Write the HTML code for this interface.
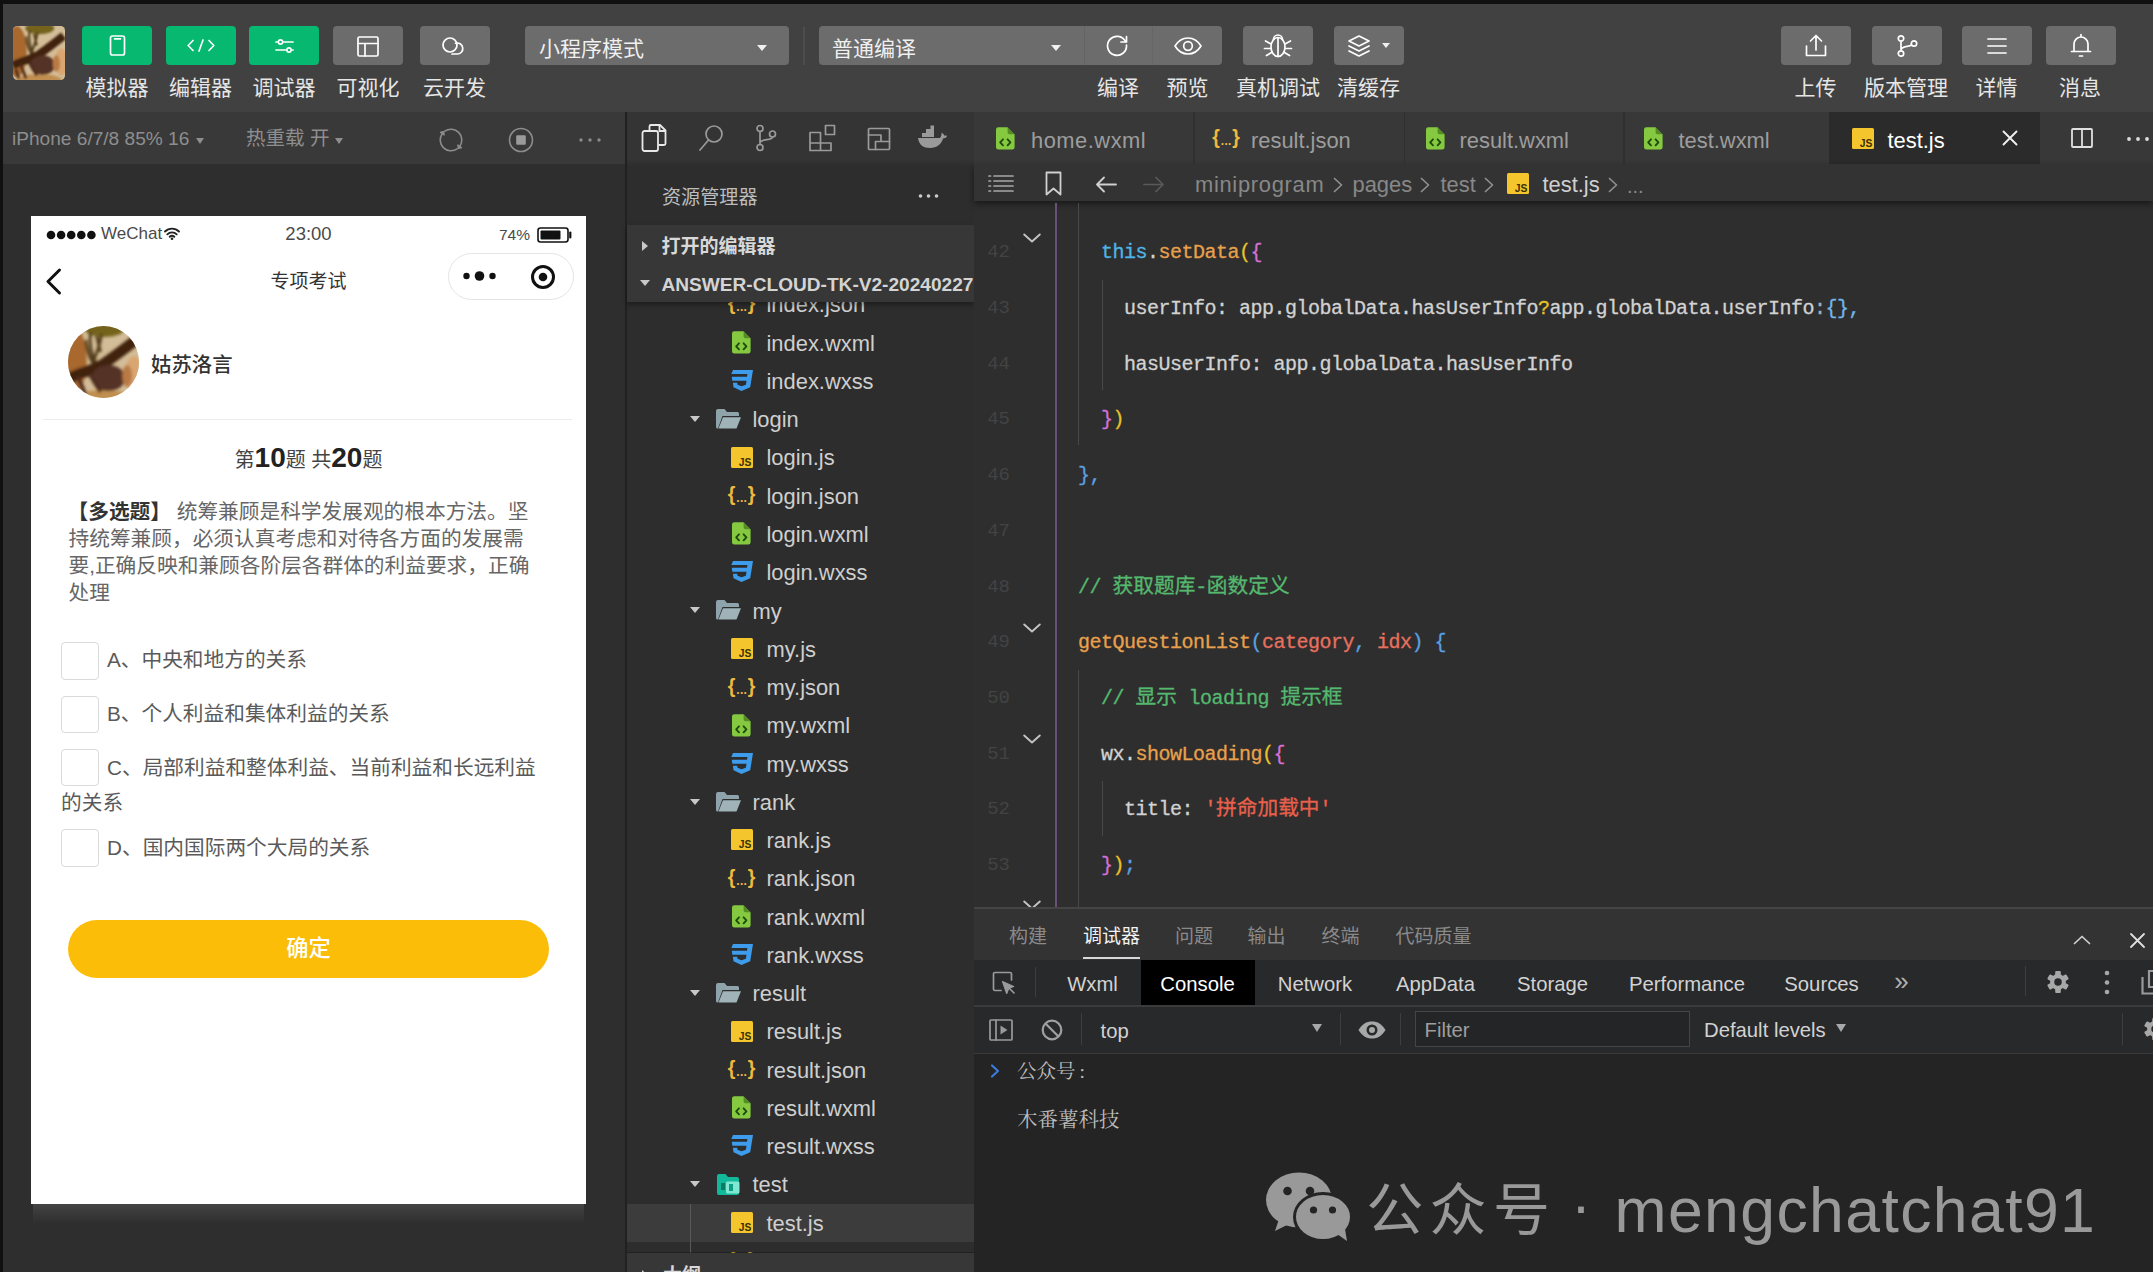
<!DOCTYPE html>
<html lang="zh-CN"><head><meta charset="utf-8"><title>微信开发者工具</title>
<style>
html,body{margin:0;padding:0;background:#101010;}
body{width:2153px;height:1272px;overflow:hidden;position:relative;font-family:"Liberation Sans","Noto Sans CJK SC",sans-serif;}
.a{position:absolute;white-space:nowrap;box-sizing:border-box;}
.m{font-family:"Liberation Mono","Noto Sans CJK SC",monospace;}
.s{font-family:"Liberation Serif","Noto Serif CJK SC",serif;}
svg{overflow:visible;}
b{font-weight:bold;}

</style></head>
<body>
<div class="a" style="left:3px;top:4px;width:2150px;height:108px;background:#414141;"></div>
<svg preserveAspectRatio="none" class="a" style="left:13px;top:26px;" width="52" height="54" viewBox="0 0 72 72"><defs><clipPath id="avc1"><rect x="0" y="0" width="72" height="72" rx="6"/></clipPath><filter id="avb1" x="-20%" y="-20%" width="140%" height="140%"><feGaussianBlur stdDeviation="1.600"/></filter></defs><g clip-path="url(#avc1)"><rect width="72" height="72" fill="#d3bd98"/><g filter="url(#avb1)"><ellipse cx="5" cy="34" rx="14" ry="34" fill="#a8682e"/><ellipse cx="37" cy="3" rx="20" ry="8" fill="#75641f"/><ellipse cx="67" cy="48" rx="9" ry="18" fill="#d9a672"/><ellipse cx="36" cy="73" rx="32" ry="9" fill="#c08e50"/><path d="M23 6C21 18 23 28 29 38M34 8C32 20 29 28 26 34M29 10L33 26M18 14C19 24 22 32 26 38" fill="none" stroke="#4e3814" stroke-width="2.800"/><path d="M0 53C14 45 26 45 36 38S56 24 70 13" fill="none" stroke="#41200f" stroke-width="11"/><ellipse cx="41" cy="52" rx="17" ry="13" fill="#553328"/><path d="M10 50L18 70M22 48L33 66M4 58L8 70" fill="none" stroke="#4e2c1a" stroke-width="4"/><ellipse cx="60" cy="50" rx="5" ry="11" fill="#b97a44"/></g></g></svg>
<div class="a" style="left:82px;top:26px;width:70px;height:39px;background:#06b870;border-radius:4px;"></div>
<div class="a" style="left:165.5px;top:26px;width:70px;height:39px;background:#06b870;border-radius:4px;"></div>
<div class="a" style="left:249px;top:26px;width:70px;height:39px;background:#06b870;border-radius:4px;"></div>
<div class="a" style="left:333px;top:26px;width:70px;height:39px;background:#6c6c6c;border-radius:4px;"></div>
<div class="a" style="left:419.5px;top:26px;width:70px;height:39px;background:#6c6c6c;border-radius:4px;"></div>
<svg class="a" style="left:108.5px;top:35px;" width="17" height="21" viewBox="0 0 17 21"><rect x="1.500" y="1" width="14" height="19" rx="2" fill="none" stroke="#fff" stroke-width="1.7" stroke-linecap="round" stroke-linejoin="round"/><path d="M5.500 3.800h6" fill="none" stroke="#fff" stroke-width="1.7" stroke-linecap="round" stroke-linejoin="round"/></svg>
<svg class="a" style="left:186.5px;top:39px;" width="28" height="13" viewBox="0 0 28 13"><path d="M6 1.500L1.200 6.500L6 11.500M22 1.500L26.800 6.500L22 11.500M16 1L12 12" fill="none" stroke="#fff" stroke-width="1.7" stroke-linecap="round" stroke-linejoin="round"/></svg>
<svg class="a" style="left:274.5px;top:39px;" width="19" height="14" viewBox="0 0 19 14"><path d="M1 3h17M1 11h17" fill="none" stroke="#fff" stroke-width="1.7" stroke-linecap="round" stroke-linejoin="round"/><circle cx="5.500" cy="3" r="2.100" fill="#06b870" stroke="#fff" stroke-width="1.600"/><circle cx="14" cy="11" r="2.100" fill="#06b870" stroke="#fff" stroke-width="1.600"/></svg>
<svg class="a" style="left:357px;top:35.5px;" width="22" height="21" viewBox="0 0 22 21"><rect x="1" y="1" width="20" height="19" rx="1.5" fill="none" stroke="#fff" stroke-width="1.7" stroke-linecap="round" stroke-linejoin="round"/><path d="M1 7.500h20M8 7.500v12.500" fill="none" stroke="#fff" stroke-width="1.7" stroke-linecap="round" stroke-linejoin="round"/></svg>
<svg class="a" style="left:441px;top:37px;" width="26" height="18" viewBox="0 0 26 18"><circle cx="9" cy="8" r="7" fill="none" stroke="#fff" stroke-width="1.7" stroke-linecap="round" stroke-linejoin="round"/><path d="M14.500 6.300a5.500 5.500 0 1 1 1.500 10.700h-5" fill="none" stroke="#fff" stroke-width="1.7" stroke-linecap="round" stroke-linejoin="round"/></svg>
<div class="a " style="left:57px;top:72px;height:32px;line-height:32px;font-size:21px;color:#e6e6e6;width:120px;text-align:center;">模拟器</div>
<div class="a " style="left:140.5px;top:72px;height:32px;line-height:32px;font-size:21px;color:#e6e6e6;width:120px;text-align:center;">编辑器</div>
<div class="a " style="left:224px;top:72px;height:32px;line-height:32px;font-size:21px;color:#e6e6e6;width:120px;text-align:center;">调试器</div>
<div class="a " style="left:308px;top:72px;height:32px;line-height:32px;font-size:21px;color:#e6e6e6;width:120px;text-align:center;">可视化</div>
<div class="a " style="left:394.5px;top:72px;height:32px;line-height:32px;font-size:21px;color:#e6e6e6;width:120px;text-align:center;">云开发</div>
<div class="a" style="left:524.5px;top:26px;width:264.5px;height:39px;background:#6c6c6c;border-radius:4px;"></div>
<div class="a " style="left:539px;top:32.5px;height:32px;line-height:32px;font-size:21px;color:#f0f0f0;">小程序模式</div>
<div class="a" style="left:757px;top:44.500px;border-left:5px solid transparent;border-right:5px solid transparent;border-top:6px solid #f0f0f0;width:0;height:0"></div>
<div class="a" style="left:803px;top:27px;width:1.5px;height:38px;background:#4d4d4d;"></div>
<div class="a" style="left:818.5px;top:26px;width:403.5px;height:39px;background:#6c6c6c;border-radius:4px;"></div>
<div class="a" style="left:1084px;top:26px;width:1.2px;height:39px;background:#646464;"></div>
<div class="a" style="left:1152px;top:26px;width:1.2px;height:39px;background:#666;"></div>
<div class="a " style="left:832px;top:32.5px;height:32px;line-height:32px;font-size:21px;color:#f0f0f0;">普通编译</div>
<div class="a" style="left:1051px;top:44.500px;border-left:5px solid transparent;border-right:5px solid transparent;border-top:6px solid #f0f0f0;width:0;height:0"></div>
<svg class="a" style="left:1105px;top:33px;" width="24" height="24" viewBox="0 0 24 24"><path d="M20.500 8.500A9.500 9.500 0 1 0 21.500 12" fill="none" stroke="#fff" stroke-width="1.7" stroke-linecap="round" stroke-linejoin="round"/><path d="M21.500 3.500v5.500h-5.500" fill="none" stroke="#fff" stroke-width="1.7" stroke-linecap="round" stroke-linejoin="round"/></svg>
<svg class="a" style="left:1174px;top:37px;" width="28" height="18" viewBox="0 0 28 18"><path d="M1 9C5 2.500 9.500 1 14 1s9 1.500 13 8c-4 6.500-8.500 8-13 8S5 15.500 1 9z" fill="none" stroke="#fff" stroke-width="1.7" stroke-linecap="round" stroke-linejoin="round"/><circle cx="14" cy="9" r="4.300" fill="none" stroke="#fff" stroke-width="1.7" stroke-linecap="round" stroke-linejoin="round"/></svg>
<div class="a" style="left:1243px;top:26px;width:70px;height:39px;background:#6c6c6c;border-radius:4px;"></div>
<svg class="a" style="left:1262.5px;top:33px;" width="30" height="26" viewBox="0 0 30 26"><ellipse cx="15" cy="14" rx="7" ry="9.500" fill="none" stroke="#fff" stroke-width="1.7" stroke-linecap="round" stroke-linejoin="round"/><path d="M15 4.500v19M10.500 6.500a4.500 4.500 0 0 1 9 0M8 11l-5.500-3M8 15.500H1.500M8.500 19.500l-5 3M22 11l5.500-3M22 15.500h6.500M21.500 19.500l5 3" fill="none" stroke="#fff" stroke-width="1.7" stroke-linecap="round" stroke-linejoin="round"/></svg>
<div class="a" style="left:1333.5px;top:26px;width:70px;height:39px;background:#6c6c6c;border-radius:4px;"></div>
<svg class="a" style="left:1347px;top:34px;" width="24" height="24" viewBox="0 0 24 24"><path d="M12 2L22 7L12 12L2 7z M2 12L12 17L22 12 M2 17L12 22L22 17" fill="none" stroke="#fff" stroke-width="1.7" stroke-linecap="round" stroke-linejoin="round"/></svg>
<div class="a" style="left:1382px;top:43px;border-left:4px solid transparent;border-right:4px solid transparent;border-top:5px solid #f0f0f0;width:0;height:0"></div>
<div class="a " style="left:1058px;top:72px;height:32px;line-height:32px;font-size:21px;color:#e6e6e6;width:120px;text-align:center;">编译</div>
<div class="a " style="left:1127.5px;top:72px;height:32px;line-height:32px;font-size:21px;color:#e6e6e6;width:120px;text-align:center;">预览</div>
<div class="a " style="left:1218px;top:72px;height:32px;line-height:32px;font-size:21px;color:#e6e6e6;width:120px;text-align:center;">真机调试</div>
<div class="a " style="left:1308.5px;top:72px;height:32px;line-height:32px;font-size:21px;color:#e6e6e6;width:120px;text-align:center;">清缓存</div>
<div class="a" style="left:1781px;top:26px;width:70px;height:39px;background:#6c6c6c;border-radius:4px;"></div>
<div class="a" style="left:1871.5px;top:26px;width:70px;height:39px;background:#6c6c6c;border-radius:4px;"></div>
<div class="a" style="left:1962px;top:26px;width:70px;height:39px;background:#6c6c6c;border-radius:4px;"></div>
<div class="a" style="left:2045.5px;top:26px;width:70px;height:39px;background:#6c6c6c;border-radius:4px;"></div>
<svg class="a" style="left:1805px;top:34px;" width="22" height="24" viewBox="0 0 22 24"><path d="M1.500 12v9.500h19V12M11 16V2M5.500 7L11 1.500L16.500 7" fill="none" stroke="#fff" stroke-width="1.7" stroke-linecap="round" stroke-linejoin="round"/></svg>
<svg class="a" style="left:1895.5px;top:35px;" width="22" height="22" viewBox="0 0 22 22"><circle cx="5" cy="3.500" r="2.700" fill="none" stroke="#fff" stroke-width="1.7" stroke-linecap="round" stroke-linejoin="round"/><circle cx="5" cy="18.500" r="2.700" fill="none" stroke="#fff" stroke-width="1.7" stroke-linecap="round" stroke-linejoin="round"/><circle cx="18" cy="8.500" r="2.700" fill="none" stroke="#fff" stroke-width="1.7" stroke-linecap="round" stroke-linejoin="round"/><path d="M5 6.200v9.600M5 15c0-4 8-3 10.500-5" fill="none" stroke="#fff" stroke-width="1.7" stroke-linecap="round" stroke-linejoin="round"/></svg>
<svg class="a" style="left:1987px;top:37px;" width="20" height="18" viewBox="0 0 20 18"><path d="M1 2h18M1 9h18M1 16h18" fill="none" stroke="#fff" stroke-width="1.7" stroke-linecap="round" stroke-linejoin="round"/></svg>
<svg class="a" style="left:2069.5px;top:33px;" width="22" height="26" viewBox="0 0 22 26"><path d="M4 18.500V11a7 7 0 0 1 14 0v7.500M1.500 18.500h19M9.500 23h3M11 1.500v2" fill="none" stroke="#fff" stroke-width="1.7" stroke-linecap="round" stroke-linejoin="round"/></svg>
<div class="a " style="left:1755.5px;top:72px;height:32px;line-height:32px;font-size:21px;color:#e6e6e6;width:120px;text-align:center;">上传</div>
<div class="a " style="left:1846px;top:72px;height:32px;line-height:32px;font-size:21px;color:#e6e6e6;width:120px;text-align:center;">版本管理</div>
<div class="a " style="left:1936.5px;top:72px;height:32px;line-height:32px;font-size:21px;color:#e6e6e6;width:120px;text-align:center;">详情</div>
<div class="a " style="left:2020px;top:72px;height:32px;line-height:32px;font-size:21px;color:#e6e6e6;width:120px;text-align:center;">消息</div>
<div class="a" style="left:3px;top:112px;width:622px;height:52.4px;background:#393939;"></div>
<div class="a " style="left:12px;top:124px;height:29px;line-height:29px;font-size:19.1px;color:#8e8e8e;">iPhone 6/7/8 85% 16</div>
<div class="a" style="left:196px;top:137.500px;border-left:4px solid transparent;border-right:4px solid transparent;border-top:6px solid #8e8e8e;width:0;height:0"></div>
<div class="a " style="left:246px;top:124px;height:29px;line-height:29px;font-size:19.5px;color:#8e8e8e;">热重载 开</div>
<div class="a" style="left:335px;top:137.500px;border-left:4px solid transparent;border-right:4px solid transparent;border-top:6px solid #8e8e8e;width:0;height:0"></div>
<svg class="a" style="left:439px;top:128.4px;" width="24" height="24" viewBox="0 0 24 24"><path d="M5.810 3.150A10.800 10.800 0 0 1 20.850 18.190M18.190 20.850A10.800 10.800 0 0 1 3.150 5.810" fill="none" stroke="#8c8c8c" stroke-width="1.6" stroke-linecap="round" stroke-linejoin="round"/><path d="M19.150 20.700L22.980 19.680L18.720 16.700zM4.870 3.350L1.020 4.320L5.280 7.300z" fill="#8c8c8c" stroke="#8c8c8c" stroke-width="1" stroke-linejoin="round"/></svg>
<svg class="a" style="left:507.7px;top:127.4px;" width="26" height="26" viewBox="0 0 26 26"><circle cx="13" cy="13" r="11.500" fill="none" stroke="#8c8c8c" stroke-width="1.6" stroke-linecap="round" stroke-linejoin="round"/><rect x="8.200" y="8.200" width="9.600" height="9.600" rx="1" fill="#9a9a9a"/></svg>
<svg class="a" style="left:578px;top:137px;" width="24" height="6" viewBox="0 0 24 6"><circle cx="3" cy="3" r="1.700" fill="#8c8c8c"/><circle cx="12" cy="3" r="1.700" fill="#8c8c8c"/><circle cx="21" cy="3" r="1.700" fill="#8c8c8c"/></svg>
<div class="a" style="left:3px;top:164.4px;width:622px;height:1108px;background:#2e2e2e;"></div>
<div class="a" style="left:624.6px;top:112px;width:2.6px;height:1160px;background:#212121;"></div>
<div class="a" style="left:33px;top:1204px;width:551px;height:20px;background:linear-gradient(#454545,#3a3a3a 40%,#2e2e2e);"></div>
<div class="a" style="left:31px;top:216px;width:555px;height:988px;background:#fff;"></div>
<svg class="a" style="left:45.5px;top:229.5px;" width="51" height="10" viewBox="0 0 51 10"><circle cx="5" cy="5" r="4.300" fill="#111"/><circle cx="15.1" cy="5" r="4.300" fill="#111"/><circle cx="25.2" cy="5" r="4.300" fill="#111"/><circle cx="35.3" cy="5" r="4.300" fill="#111"/><circle cx="45.4" cy="5" r="4.300" fill="#111"/></svg>
<div class="a " style="left:101px;top:221px;height:26px;line-height:26px;font-size:17px;color:#4a4a4a;">WeChat</div>
<svg class="a" style="left:163.5px;top:227px;" width="16" height="13" viewBox="0 0 16 13"><path d="M1 4.500a10 10 0 0 1 14 0M3.300 7.300a6.600 6.600 0 0 1 9.400 0M5.700 9.800a3.300 3.300 0 0 1 4.600 0" fill="none" stroke="#222" stroke-width="1.900" stroke-linecap="round"/><circle cx="8" cy="11.700" r="1.300" fill="#222"/></svg>
<div class="a " style="left:258.5px;top:219.5px;height:28px;line-height:28px;font-size:18.5px;color:#4a4a4a;width:100px;text-align:center;">23:00</div>
<div class="a " style="left:499px;top:223px;height:23px;line-height:23px;font-size:15.5px;color:#4a4a4a;">74%</div>
<svg class="a" style="left:537px;top:226.5px;" width="36" height="16" viewBox="0 0 36 16"><rect x="1" y="1" width="30" height="14" rx="2.500" fill="none" stroke="#111" stroke-width="1.600"/><rect x="3.500" y="3.500" width="20" height="9" rx="1" fill="#111"/><path d="M33.300 5.500v5" stroke="#111" stroke-width="2.200" stroke-linecap="round"/></svg>
<svg class="a" style="left:45px;top:268px;" width="18" height="27" viewBox="0 0 18 27"><path d="M14.500 2L3 13.500L14.500 25" fill="none" stroke="#111" stroke-width="3" stroke-linecap="round" stroke-linejoin="round"/></svg>
<div class="a " style="left:208.5px;top:267.5px;height:28px;line-height:28px;font-size:19px;color:#333;width:200px;text-align:center;">专项考试</div>
<div class="a" style="left:448px;top:253px;width:126px;height:47px;border-radius:24px;border:1px solid #e4e4e4;background:#fff"></div>
<svg class="a" style="left:460px;top:270px;" width="40" height="12" viewBox="0 0 40 12"><circle cx="6.500" cy="6" r="3.200" fill="#111"/><circle cx="19.500" cy="6" r="4.800" fill="#111"/><circle cx="32.500" cy="6" r="3.200" fill="#111"/></svg>
<svg class="a" style="left:530px;top:263.5px;" width="26" height="26" viewBox="0 0 26 26"><circle cx="13" cy="13" r="10.500" fill="none" stroke="#111" stroke-width="3"/><circle cx="13" cy="13" r="4.300" fill="#111"/></svg>
<svg preserveAspectRatio="none" class="a" style="left:68px;top:326px;" width="71" height="72" viewBox="0 0 72 72"><defs><clipPath id="avc2"><circle cx="36" cy="36" r="36"/></clipPath><filter id="avb2" x="-20%" y="-20%" width="140%" height="140%"><feGaussianBlur stdDeviation="1.600"/></filter></defs><g clip-path="url(#avc2)"><rect width="72" height="72" fill="#d3bd98"/><g filter="url(#avb2)"><ellipse cx="5" cy="34" rx="14" ry="34" fill="#a8682e"/><ellipse cx="37" cy="3" rx="20" ry="8" fill="#75641f"/><ellipse cx="67" cy="48" rx="9" ry="18" fill="#d9a672"/><ellipse cx="36" cy="73" rx="32" ry="9" fill="#c08e50"/><path d="M23 6C21 18 23 28 29 38M34 8C32 20 29 28 26 34M29 10L33 26M18 14C19 24 22 32 26 38" fill="none" stroke="#4e3814" stroke-width="2.800"/><path d="M0 53C14 45 26 45 36 38S56 24 70 13" fill="none" stroke="#41200f" stroke-width="11"/><ellipse cx="41" cy="52" rx="17" ry="13" fill="#553328"/><path d="M10 50L18 70M22 48L33 66M4 58L8 70" fill="none" stroke="#4e2c1a" stroke-width="4"/><ellipse cx="60" cy="50" rx="5" ry="11" fill="#b97a44"/></g></g></svg>
<div class="a " style="left:151px;top:349.5px;height:31px;line-height:31px;font-size:20.4px;color:#333;font-weight:500;">姑苏洛言</div>
<div class="a" style="left:43px;top:418.5px;width:529px;height:1px;background:#ececec;"></div>
<div class="a " style="left:158.5px;top:438px;height:40px;line-height:40px;font-size:20px;color:#444;width:300px;text-align:center;">第<b style="font-size:28px;color:#222">10</b>题 共<b style="font-size:28px;color:#222">20</b>题</div>
<div class="a " style="left:67.5px;top:497.6px;height:28px;line-height:28px;font-size:20.7px;color:#666;"><b style="color:#333">【多选题】</b> 统筹兼顾是科学发展观的根本方法。坚</div>
<div class="a " style="left:68.5px;top:524.73px;height:28px;line-height:28px;font-size:20.7px;color:#666;">持统筹兼顾，必须认真考虑和对待各方面的发展需</div>
<div class="a " style="left:68.5px;top:551.86px;height:28px;line-height:28px;font-size:20.7px;color:#666;">要,正确反映和兼顾各阶层各群体的利益要求，正确</div>
<div class="a " style="left:68.5px;top:578.99px;height:28px;line-height:28px;font-size:20.7px;color:#666;">处理</div>
<div class="a" style="left:61px;top:642px;width:37.500px;height:37.500px;border:1.500px solid #dadada;border-radius:4px;background:#fff"></div>
<div class="a " style="left:107px;top:645.2px;height:30px;line-height:30px;font-size:20.7px;color:#5a5a5a;">A、中央和地方的关系</div>
<div class="a" style="left:61px;top:695.5px;width:37.500px;height:37.500px;border:1.500px solid #dadada;border-radius:4px;background:#fff"></div>
<div class="a " style="left:107px;top:698.9px;height:30px;line-height:30px;font-size:20.7px;color:#5a5a5a;">B、个人利益和集体利益的关系</div>
<div class="a" style="left:61px;top:748.5px;width:37.500px;height:37.500px;border:1.500px solid #dadada;border-radius:4px;background:#fff"></div>
<div class="a " style="left:107px;top:752.5px;height:30px;line-height:30px;font-size:20.7px;color:#5a5a5a;">C、局部利益和整体利益、当前利益和长远利益</div>
<div class="a" style="left:61px;top:829px;width:37.500px;height:37.500px;border:1.500px solid #dadada;border-radius:4px;background:#fff"></div>
<div class="a " style="left:107px;top:833.2px;height:30px;line-height:30px;font-size:20.7px;color:#5a5a5a;">D、国内国际两个大局的关系</div>
<div class="a " style="left:61px;top:788px;height:30px;line-height:30px;font-size:20.7px;color:#5a5a5a;">的关系</div>
<div class="a" style="left:68px;top:919.5px;width:481px;height:58px;background:#fbbd08;border-radius:29px;"></div>
<div class="a " style="left:208.5px;top:932px;height:33px;line-height:33px;font-size:22.3px;color:#fff;width:200px;text-align:center;font-weight:500;">确定</div>
<div class="a" style="left:627px;top:112px;width:347px;height:1160px;background:#2d2d2d;"></div>
<div class="a" style="left:627px;top:112px;width:347px;height:54px;background:linear-gradient(#343434,#343434 88%,#2d2d2d);"></div>
<svg class="a" style="left:641px;top:123px;" width="26" height="30" viewBox="0 0 26 30"><path d="M8.500 7.500V3.500a1.500 1.500 0 0 1 1.500-1.500h9l5.500 5.500v13a1.500 1.500 0 0 1-1.500 1.500h-5" fill="none" stroke="#e8e8e8" stroke-width="1.800" stroke-linecap="round" stroke-linejoin="round"/><path d="M18.500 2.500v5.500h5.500" fill="none" stroke="#e8e8e8" stroke-width="1.800" stroke-linecap="round" stroke-linejoin="round"/><rect x="1.500" y="8" width="15.500" height="20" rx="2" fill="none" stroke="#e8e8e8" stroke-width="1.800" stroke-linecap="round" stroke-linejoin="round"/></svg>
<svg class="a" style="left:698px;top:124px;" width="26" height="28" viewBox="0 0 26 28"><circle cx="16" cy="10" r="8" fill="none" stroke="#9a9a9a" stroke-width="1.700" stroke-linecap="round" stroke-linejoin="round"/><path d="M10.500 16L2 26" fill="none" stroke="#9a9a9a" stroke-width="1.700" stroke-linecap="round" stroke-linejoin="round"/></svg>
<svg class="a" style="left:755px;top:124px;" width="22" height="28" viewBox="0 0 22 28"><circle cx="5" cy="4.500" r="3" fill="none" stroke="#9a9a9a" stroke-width="1.700" stroke-linecap="round" stroke-linejoin="round"/><circle cx="5" cy="23.500" r="3" fill="none" stroke="#9a9a9a" stroke-width="1.700" stroke-linecap="round" stroke-linejoin="round"/><circle cx="17.500" cy="10" r="3" fill="none" stroke="#9a9a9a" stroke-width="1.700" stroke-linecap="round" stroke-linejoin="round"/><path d="M5 7.500v13M5 19c0-5 12.500-2 12.500-6" fill="none" stroke="#9a9a9a" stroke-width="1.700" stroke-linecap="round" stroke-linejoin="round"/></svg>
<svg class="a" style="left:808px;top:124px;" width="28" height="28" viewBox="0 0 28 28"><path d="M2 8.500h10.500v10.500h10.500v7.500H2zM12.500 19H2M12.500 19v7.500" fill="none" stroke="#9a9a9a" stroke-width="1.700" stroke-linecap="round" stroke-linejoin="round"/><rect x="17.500" y="1.500" width="9" height="9" fill="none" stroke="#9a9a9a" stroke-width="1.700" stroke-linecap="round" stroke-linejoin="round"/></svg>
<svg class="a" style="left:867px;top:127px;" width="24" height="24" viewBox="0 0 24 24"><rect x="1.500" y="1.500" width="21" height="21" rx="1" fill="none" stroke="#9a9a9a" stroke-width="1.700" stroke-linecap="round" stroke-linejoin="round"/><path d="M1.500 8h12.500v6.500M22.500 14.500H8.500v8" fill="none" stroke="#9a9a9a" stroke-width="1.700" stroke-linecap="round" stroke-linejoin="round"/></svg>
<svg class="a" style="left:917px;top:127px;" width="30" height="22" viewBox="0 0 30 22"><path d="M1 11h22c1.500-2 1.800-4 1.500-5.500 1.500 0.800 2.500 2 2.800 3.200 1-0.200 2-0.200 2.700 0.300-0.800 1.800-2.500 2.500-4 2.500C24.500 17 20 21 13 21 6.500 21 2 18 1 11z" fill="#9a9a9a"/><path d="M5 6h12v4H5zM9 2h8v4H9zM13.500-1.500h3.500v3.500h-3.500z" fill="#9a9a9a"/></svg>
<div class="a " style="left:662px;top:182.5px;height:29px;line-height:29px;font-size:19.1px;color:#bdbdbd;">资源管理器</div>
<svg class="a" style="left:918px;top:193px;" width="22" height="6" viewBox="0 0 22 6"><circle cx="2.500" cy="3" r="1.800" fill="#ccc"/><circle cx="10.500" cy="3" r="1.800" fill="#ccc"/><circle cx="18.500" cy="3" r="1.800" fill="#ccc"/></svg>
<div class="a" style="left:627px;top:1204px;width:347px;height:38px;background:#3c3c3c;"></div>
<div class="a" style="left:689.5px;top:1204px;width:1.2px;height:50px;background:#5a5a5a;"></div>
<div class="a " style="left:724.5px;top:288.04px;height:30px;line-height:30px;font-size:19.5px;color:#f0b840;width:34px;text-align:center;font-weight:bold;">{<span style="font-size:12px;letter-spacing:0.300px;position:relative;top:1px;margin:0 0.500px 0 1px">...</span>}</div>
<div class="a " style="left:766.5px;top:288.44px;height:33px;line-height:33px;font-size:21.9px;color:#cfcfcf;">index.json</div>
<svg class="a" style="left:732.2px;top:331.1px;" width="18.6" height="22.8" viewBox="0 0 20 24"><path d="M2.500 0h10L20 7.500V21.500a2.500 2.500 0 0 1-2.500 2.500h-15A2.500 2.500 0 0 1 0 21.500v-19A2.500 2.500 0 0 1 2.500 0z" fill="#85c940"/><path d="M12.500 0v5.500a2 2 0 0 0 2 2H20z" fill="#2d5a10" opacity=".550"/><path d="M7.500 13L4.500 16.200L7.500 19.500M12.500 13L15.500 16.200L12.500 19.500" fill="none" stroke="#1f4a0c" stroke-width="2" stroke-linecap="round" stroke-linejoin="round"/></svg>
<div class="a " style="left:766.5px;top:326.7px;height:33px;line-height:33px;font-size:21.9px;color:#cfcfcf;">index.wxml</div>
<svg preserveAspectRatio="none" class="a" style="left:730px;top:370.06px;" width="23" height="21.4" viewBox="0 0 23 23"><path d="M3 0h20l-2.800 18.500L11.500 22.500 3.500 18.500l-0.600-4.800h4.300l0.300 2.100 4 1.800 4.400-1.800 0.600-4.300H2.300l-0.500-4.200H17l0.400-3.100H1.300z" fill="#3d9cec"/></svg>
<div class="a " style="left:766.5px;top:364.96px;height:33px;line-height:33px;font-size:21.9px;color:#cfcfcf;">index.wxss</div>
<div class="a" style="left:690px;top:416.02px;border-left:5px solid transparent;border-right:5px solid transparent;border-top:6.500px solid #c8c8c8;width:0;height:0"></div>
<svg class="a" style="left:716px;top:409.02px;" width="25" height="20" viewBox="0 0 25 20"><path d="M0 2a2 2 0 0 1 2-2h6.500l2.500 3H21.500a1.500 1.500 0 0 1 1.500 1.500V7H6.500L2 19.500H1.500A1.500 1.500 0 0 1 0 18z" fill="#8fa3ab"/><path d="M7 8.200H25L20.500 19.500H2.500z" fill="#9fb3b9"/></svg>
<div class="a " style="left:752.5px;top:403.22px;height:33px;line-height:33px;font-size:21.9px;color:#cfcfcf;">login</div>
<svg class="a" style="left:730.5px;top:446.78px;" width="22" height="21" viewBox="0 0 22 21"><rect x="0" y="0" width="22" height="21" rx="1.500" fill="#f5c52d"/><text x="20.300" y="18.800" text-anchor="end" font-family="Liberation Sans,sans-serif" font-weight="bold" font-size="10.300" fill="#3a3000">JS</text></svg>
<div class="a " style="left:766.5px;top:441.48px;height:33px;line-height:33px;font-size:21.9px;color:#cfcfcf;">login.js</div>
<div class="a " style="left:724.5px;top:479.34px;height:30px;line-height:30px;font-size:19.5px;color:#f0b840;width:34px;text-align:center;font-weight:bold;">{<span style="font-size:12px;letter-spacing:0.300px;position:relative;top:1px;margin:0 0.500px 0 1px">...</span>}</div>
<div class="a " style="left:766.5px;top:479.74px;height:33px;line-height:33px;font-size:21.9px;color:#cfcfcf;">login.json</div>
<svg class="a" style="left:732.2px;top:522.4px;" width="18.6" height="22.8" viewBox="0 0 20 24"><path d="M2.500 0h10L20 7.500V21.500a2.500 2.500 0 0 1-2.500 2.500h-15A2.500 2.500 0 0 1 0 21.500v-19A2.500 2.500 0 0 1 2.500 0z" fill="#85c940"/><path d="M12.500 0v5.500a2 2 0 0 0 2 2H20z" fill="#2d5a10" opacity=".550"/><path d="M7.500 13L4.500 16.200L7.500 19.500M12.500 13L15.500 16.200L12.500 19.500" fill="none" stroke="#1f4a0c" stroke-width="2" stroke-linecap="round" stroke-linejoin="round"/></svg>
<div class="a " style="left:766.5px;top:518px;height:33px;line-height:33px;font-size:21.9px;color:#cfcfcf;">login.wxml</div>
<svg preserveAspectRatio="none" class="a" style="left:730px;top:561.36px;" width="23" height="21.4" viewBox="0 0 23 23"><path d="M3 0h20l-2.800 18.500L11.500 22.500 3.500 18.500l-0.600-4.800h4.300l0.300 2.100 4 1.800 4.400-1.800 0.600-4.300H2.300l-0.500-4.200H17l0.400-3.100H1.300z" fill="#3d9cec"/></svg>
<div class="a " style="left:766.5px;top:556.26px;height:33px;line-height:33px;font-size:21.9px;color:#cfcfcf;">login.wxss</div>
<div class="a" style="left:690px;top:607.32px;border-left:5px solid transparent;border-right:5px solid transparent;border-top:6.500px solid #c8c8c8;width:0;height:0"></div>
<svg class="a" style="left:716px;top:600.32px;" width="25" height="20" viewBox="0 0 25 20"><path d="M0 2a2 2 0 0 1 2-2h6.500l2.500 3H21.500a1.500 1.500 0 0 1 1.500 1.500V7H6.500L2 19.500H1.500A1.500 1.500 0 0 1 0 18z" fill="#8fa3ab"/><path d="M7 8.200H25L20.500 19.500H2.500z" fill="#9fb3b9"/></svg>
<div class="a " style="left:752.5px;top:594.52px;height:33px;line-height:33px;font-size:21.9px;color:#cfcfcf;">my</div>
<svg class="a" style="left:730.5px;top:638.08px;" width="22" height="21" viewBox="0 0 22 21"><rect x="0" y="0" width="22" height="21" rx="1.500" fill="#f5c52d"/><text x="20.300" y="18.800" text-anchor="end" font-family="Liberation Sans,sans-serif" font-weight="bold" font-size="10.300" fill="#3a3000">JS</text></svg>
<div class="a " style="left:766.5px;top:632.78px;height:33px;line-height:33px;font-size:21.9px;color:#cfcfcf;">my.js</div>
<div class="a " style="left:724.5px;top:670.64px;height:30px;line-height:30px;font-size:19.5px;color:#f0b840;width:34px;text-align:center;font-weight:bold;">{<span style="font-size:12px;letter-spacing:0.300px;position:relative;top:1px;margin:0 0.500px 0 1px">...</span>}</div>
<div class="a " style="left:766.5px;top:671.04px;height:33px;line-height:33px;font-size:21.9px;color:#cfcfcf;">my.json</div>
<svg class="a" style="left:732.2px;top:713.7px;" width="18.6" height="22.8" viewBox="0 0 20 24"><path d="M2.500 0h10L20 7.500V21.500a2.500 2.500 0 0 1-2.500 2.500h-15A2.500 2.500 0 0 1 0 21.500v-19A2.500 2.500 0 0 1 2.500 0z" fill="#85c940"/><path d="M12.500 0v5.500a2 2 0 0 0 2 2H20z" fill="#2d5a10" opacity=".550"/><path d="M7.500 13L4.500 16.200L7.500 19.500M12.500 13L15.500 16.200L12.500 19.500" fill="none" stroke="#1f4a0c" stroke-width="2" stroke-linecap="round" stroke-linejoin="round"/></svg>
<div class="a " style="left:766.5px;top:709.3px;height:33px;line-height:33px;font-size:21.9px;color:#cfcfcf;">my.wxml</div>
<svg preserveAspectRatio="none" class="a" style="left:730px;top:752.66px;" width="23" height="21.4" viewBox="0 0 23 23"><path d="M3 0h20l-2.800 18.500L11.500 22.500 3.500 18.500l-0.600-4.800h4.300l0.300 2.100 4 1.800 4.400-1.800 0.600-4.300H2.300l-0.500-4.200H17l0.400-3.100H1.300z" fill="#3d9cec"/></svg>
<div class="a " style="left:766.5px;top:747.56px;height:33px;line-height:33px;font-size:21.9px;color:#cfcfcf;">my.wxss</div>
<div class="a" style="left:690px;top:798.62px;border-left:5px solid transparent;border-right:5px solid transparent;border-top:6.500px solid #c8c8c8;width:0;height:0"></div>
<svg class="a" style="left:716px;top:791.62px;" width="25" height="20" viewBox="0 0 25 20"><path d="M0 2a2 2 0 0 1 2-2h6.500l2.500 3H21.500a1.500 1.500 0 0 1 1.500 1.500V7H6.500L2 19.500H1.500A1.500 1.500 0 0 1 0 18z" fill="#8fa3ab"/><path d="M7 8.200H25L20.500 19.500H2.500z" fill="#9fb3b9"/></svg>
<div class="a " style="left:752.5px;top:785.82px;height:33px;line-height:33px;font-size:21.9px;color:#cfcfcf;">rank</div>
<svg class="a" style="left:730.5px;top:829.38px;" width="22" height="21" viewBox="0 0 22 21"><rect x="0" y="0" width="22" height="21" rx="1.500" fill="#f5c52d"/><text x="20.300" y="18.800" text-anchor="end" font-family="Liberation Sans,sans-serif" font-weight="bold" font-size="10.300" fill="#3a3000">JS</text></svg>
<div class="a " style="left:766.5px;top:824.08px;height:33px;line-height:33px;font-size:21.9px;color:#cfcfcf;">rank.js</div>
<div class="a " style="left:724.5px;top:861.94px;height:30px;line-height:30px;font-size:19.5px;color:#f0b840;width:34px;text-align:center;font-weight:bold;">{<span style="font-size:12px;letter-spacing:0.300px;position:relative;top:1px;margin:0 0.500px 0 1px">...</span>}</div>
<div class="a " style="left:766.5px;top:862.34px;height:33px;line-height:33px;font-size:21.9px;color:#cfcfcf;">rank.json</div>
<svg class="a" style="left:732.2px;top:905px;" width="18.6" height="22.8" viewBox="0 0 20 24"><path d="M2.500 0h10L20 7.500V21.500a2.500 2.500 0 0 1-2.500 2.500h-15A2.500 2.500 0 0 1 0 21.500v-19A2.500 2.500 0 0 1 2.500 0z" fill="#85c940"/><path d="M12.500 0v5.500a2 2 0 0 0 2 2H20z" fill="#2d5a10" opacity=".550"/><path d="M7.500 13L4.500 16.200L7.500 19.500M12.500 13L15.500 16.200L12.500 19.500" fill="none" stroke="#1f4a0c" stroke-width="2" stroke-linecap="round" stroke-linejoin="round"/></svg>
<div class="a " style="left:766.5px;top:900.6px;height:33px;line-height:33px;font-size:21.9px;color:#cfcfcf;">rank.wxml</div>
<svg preserveAspectRatio="none" class="a" style="left:730px;top:943.96px;" width="23" height="21.4" viewBox="0 0 23 23"><path d="M3 0h20l-2.800 18.500L11.500 22.500 3.500 18.500l-0.600-4.800h4.300l0.300 2.100 4 1.800 4.400-1.800 0.600-4.300H2.300l-0.500-4.200H17l0.400-3.100H1.300z" fill="#3d9cec"/></svg>
<div class="a " style="left:766.5px;top:938.86px;height:33px;line-height:33px;font-size:21.9px;color:#cfcfcf;">rank.wxss</div>
<div class="a" style="left:690px;top:989.92px;border-left:5px solid transparent;border-right:5px solid transparent;border-top:6.500px solid #c8c8c8;width:0;height:0"></div>
<svg class="a" style="left:716px;top:982.92px;" width="25" height="20" viewBox="0 0 25 20"><path d="M0 2a2 2 0 0 1 2-2h6.500l2.500 3H21.500a1.500 1.500 0 0 1 1.500 1.500V7H6.500L2 19.500H1.500A1.500 1.500 0 0 1 0 18z" fill="#8fa3ab"/><path d="M7 8.200H25L20.500 19.500H2.500z" fill="#9fb3b9"/></svg>
<div class="a " style="left:752.5px;top:977.12px;height:33px;line-height:33px;font-size:21.9px;color:#cfcfcf;">result</div>
<svg class="a" style="left:730.5px;top:1020.68px;" width="22" height="21" viewBox="0 0 22 21"><rect x="0" y="0" width="22" height="21" rx="1.500" fill="#f5c52d"/><text x="20.300" y="18.800" text-anchor="end" font-family="Liberation Sans,sans-serif" font-weight="bold" font-size="10.300" fill="#3a3000">JS</text></svg>
<div class="a " style="left:766.5px;top:1015.38px;height:33px;line-height:33px;font-size:21.9px;color:#cfcfcf;">result.js</div>
<div class="a " style="left:724.5px;top:1053.24px;height:30px;line-height:30px;font-size:19.5px;color:#f0b840;width:34px;text-align:center;font-weight:bold;">{<span style="font-size:12px;letter-spacing:0.300px;position:relative;top:1px;margin:0 0.500px 0 1px">...</span>}</div>
<div class="a " style="left:766.5px;top:1053.64px;height:33px;line-height:33px;font-size:21.9px;color:#cfcfcf;">result.json</div>
<svg class="a" style="left:732.2px;top:1096.3px;" width="18.6" height="22.8" viewBox="0 0 20 24"><path d="M2.500 0h10L20 7.500V21.500a2.500 2.500 0 0 1-2.500 2.500h-15A2.500 2.500 0 0 1 0 21.500v-19A2.500 2.500 0 0 1 2.500 0z" fill="#85c940"/><path d="M12.500 0v5.500a2 2 0 0 0 2 2H20z" fill="#2d5a10" opacity=".550"/><path d="M7.500 13L4.500 16.200L7.500 19.500M12.500 13L15.500 16.200L12.500 19.500" fill="none" stroke="#1f4a0c" stroke-width="2" stroke-linecap="round" stroke-linejoin="round"/></svg>
<div class="a " style="left:766.5px;top:1091.9px;height:33px;line-height:33px;font-size:21.9px;color:#cfcfcf;">result.wxml</div>
<svg preserveAspectRatio="none" class="a" style="left:730px;top:1135.26px;" width="23" height="21.4" viewBox="0 0 23 23"><path d="M3 0h20l-2.800 18.500L11.500 22.500 3.500 18.500l-0.600-4.800h4.300l0.300 2.100 4 1.800 4.400-1.800 0.600-4.300H2.300l-0.500-4.200H17l0.400-3.100H1.300z" fill="#3d9cec"/></svg>
<div class="a " style="left:766.5px;top:1130.16px;height:33px;line-height:33px;font-size:21.9px;color:#cfcfcf;">result.wxss</div>
<div class="a" style="left:690px;top:1181.22px;border-left:5px solid transparent;border-right:5px solid transparent;border-top:6.500px solid #c8c8c8;width:0;height:0"></div>
<svg class="a" style="left:716.5px;top:1174.22px;" width="24" height="21" viewBox="0 0 24 21"><path d="M0 2a2 2 0 0 1 2-2h6.500l2.500 3H20a2 2 0 0 1 2 2v14a2 2 0 0 1-2 2H2a2 2 0 0 1-2-2z" fill="#11b89a"/><rect x="9" y="7.500" width="13.500" height="12" rx="1.500" fill="#7fe8d2"/><rect x="4" y="9" width="4" height="7" fill="#0a7a66"/><rect x="12" y="10" width="4" height="7" fill="#0e9c84"/></svg>
<div class="a " style="left:752.5px;top:1168.42px;height:33px;line-height:33px;font-size:21.9px;color:#cfcfcf;">test</div>
<svg class="a" style="left:730.5px;top:1211.98px;" width="22" height="21" viewBox="0 0 22 21"><rect x="0" y="0" width="22" height="21" rx="1.500" fill="#f5c52d"/><text x="20.300" y="18.800" text-anchor="end" font-family="Liberation Sans,sans-serif" font-weight="bold" font-size="10.300" fill="#3a3000">JS</text></svg>
<div class="a " style="left:766.5px;top:1206.68px;height:33px;line-height:33px;font-size:21.9px;color:#cfcfcf;">test.js</div>
<div class="a " style="left:724.5px;top:1244.54px;height:30px;line-height:30px;font-size:19.5px;color:#f0b840;width:34px;text-align:center;font-weight:bold;">{<span style="font-size:12px;letter-spacing:0.300px;position:relative;top:1px;margin:0 0.500px 0 1px">...</span>}</div>
<div class="a " style="left:766.5px;top:1244.94px;height:33px;line-height:33px;font-size:21.9px;color:#cfcfcf;">test.json</div>
<div class="a" style="left:627px;top:225px;width:347px;height:77px;background:#373737;box-shadow:0 3px 5px rgba(0,0,0,.350);"></div>
<div class="a" style="left:641.5px;top:240.5px;border-top:5px solid transparent;border-bottom:5px solid transparent;border-left:6.500px solid #c8c8c8;width:0;height:0"></div>
<div class="a " style="left:661.5px;top:233px;height:28px;line-height:28px;font-size:19px;color:#d8d8d8;font-weight:bold;">打开的编辑器</div>
<div class="a" style="left:639.5px;top:280px;border-left:5px solid transparent;border-right:5px solid transparent;border-top:6.500px solid #c8c8c8;width:0;height:0"></div>
<div class="a " style="left:661.5px;top:269.5px;height:29px;line-height:29px;font-size:19.1px;color:#d4d4d4;font-weight:bold;width:312px;overflow:hidden;">ANSWER-CLOUD-TK-V2-20240227</div>
<div class="a" style="left:627px;top:1252.5px;width:347px;height:20px;background:#373737;box-shadow:0 -1px 0 rgba(0,0,0,.250);"></div>
<div class="a" style="left:641.5px;top:1270px;border-top:5px solid transparent;border-bottom:5px solid transparent;border-left:6.500px solid #c8c8c8;width:0;height:0"></div>
<div class="a " style="left:663px;top:1262px;height:28px;line-height:28px;font-size:19px;color:#d8d8d8;font-weight:bold;">大纲</div>
<div class="a" style="left:974px;top:112px;width:1179px;height:798px;background:#2e2e2e;"></div>
<div class="a" style="left:974px;top:112px;width:1179px;height:52.4px;background:#383838;"></div>
<div class="a" style="left:1193px;top:112px;width:1.5px;height:52.4px;background:#303030;"></div>
<div class="a" style="left:1403.5px;top:112px;width:1.5px;height:52.4px;background:#303030;"></div>
<div class="a" style="left:1623px;top:112px;width:1.5px;height:52.4px;background:#303030;"></div>
<div class="a" style="left:1829px;top:112px;width:210.5px;height:52.4px;background:#2b2b2b;"></div>
<svg class="a" style="left:996.2px;top:126.6px;" width="18.6" height="22.8" viewBox="0 0 20 24"><path d="M2.500 0h10L20 7.500V21.500a2.500 2.500 0 0 1-2.500 2.500h-15A2.500 2.500 0 0 1 0 21.500v-19A2.500 2.500 0 0 1 2.500 0z" fill="#85c940"/><path d="M12.500 0v5.500a2 2 0 0 0 2 2H20z" fill="#2d5a10" opacity=".550"/><path d="M7.500 13L4.500 16.200L7.500 19.500M12.500 13L15.500 16.200L12.500 19.500" fill="none" stroke="#1f4a0c" stroke-width="2" stroke-linecap="round" stroke-linejoin="round"/></svg>
<div class="a " style="left:1031px;top:123.5px;height:33px;line-height:33px;font-size:21.9px;color:#9d9d9d;letter-spacing:0.500px;">home.wxml</div>
<div class="a " style="left:1209px;top:122.3px;height:30px;line-height:30px;font-size:19.5px;color:#f0b840;width:34px;text-align:center;font-weight:bold;">{<span style="font-size:12px;letter-spacing:0.300px;position:relative;top:1px;margin:0 0.500px 0 1px">...</span>}</div>
<div class="a " style="left:1251px;top:123.5px;height:33px;line-height:33px;font-size:21.9px;color:#9d9d9d;">result.json</div>
<svg class="a" style="left:1425.7px;top:126.6px;" width="18.6" height="22.8" viewBox="0 0 20 24"><path d="M2.500 0h10L20 7.500V21.500a2.500 2.500 0 0 1-2.500 2.500h-15A2.500 2.500 0 0 1 0 21.500v-19A2.500 2.500 0 0 1 2.500 0z" fill="#85c940"/><path d="M12.500 0v5.500a2 2 0 0 0 2 2H20z" fill="#2d5a10" opacity=".550"/><path d="M7.500 13L4.500 16.200L7.500 19.500M12.500 13L15.500 16.200L12.500 19.500" fill="none" stroke="#1f4a0c" stroke-width="2" stroke-linecap="round" stroke-linejoin="round"/></svg>
<div class="a " style="left:1459.5px;top:123.5px;height:33px;line-height:33px;font-size:21.9px;color:#9d9d9d;">result.wxml</div>
<svg class="a" style="left:1643.7px;top:126.6px;" width="18.6" height="22.8" viewBox="0 0 20 24"><path d="M2.500 0h10L20 7.500V21.500a2.500 2.500 0 0 1-2.500 2.500h-15A2.500 2.500 0 0 1 0 21.500v-19A2.500 2.500 0 0 1 2.500 0z" fill="#85c940"/><path d="M12.500 0v5.500a2 2 0 0 0 2 2H20z" fill="#2d5a10" opacity=".550"/><path d="M7.500 13L4.500 16.200L7.500 19.500M12.500 13L15.500 16.200L12.500 19.500" fill="none" stroke="#1f4a0c" stroke-width="2" stroke-linecap="round" stroke-linejoin="round"/></svg>
<div class="a " style="left:1678.5px;top:123.5px;height:33px;line-height:33px;font-size:21.9px;color:#9d9d9d;">test.wxml</div>
<svg class="a" style="left:1852px;top:128px;" width="22" height="21" viewBox="0 0 22 21"><rect x="0" y="0" width="22" height="21" rx="1.500" fill="#f5c52d"/><text x="20.300" y="18.800" text-anchor="end" font-family="Liberation Sans,sans-serif" font-weight="bold" font-size="10.300" fill="#3a3000">JS</text></svg>
<div class="a " style="left:1887.5px;top:123.5px;height:33px;line-height:33px;font-size:21.9px;color:#fff;">test.js</div>
<svg class="a" style="left:2002px;top:130px;" width="16" height="16" viewBox="0 0 16 16"><path d="M1.500 1.500L14.500 14.500M14.500 1.500L1.500 14.500" stroke="#f0f0f0" stroke-width="1.900" stroke-linecap="round"/></svg>
<svg class="a" style="left:2071px;top:128px;" width="22" height="20" viewBox="0 0 22 20"><rect x="1" y="1" width="20" height="18" rx="1" fill="none" stroke="#e0e0e0" stroke-width="1.800"/><path d="M11 1v18" stroke="#e0e0e0" stroke-width="1.800"/></svg>
<svg class="a" style="left:2126px;top:136px;" width="30" height="6" viewBox="0 0 30 6"><circle cx="3" cy="3" r="1.900" fill="#ddd"/><circle cx="12" cy="3" r="1.900" fill="#ddd"/><circle cx="21" cy="3" r="1.900" fill="#ddd"/></svg>
<div class="a" style="left:974px;top:164.4px;width:1179px;height:37px;background:#333333;box-shadow:0 3px 6px rgba(0,0,0,.450);"></div>
<svg class="a" style="left:988px;top:173.7px;" width="26" height="18" viewBox="0 0 26 18"><path d="M6 2h19M6 7h19M6 12h19M6 17h19M1 2h1.500M1 7h1.500M1 12h1.500M1 17h1.500" fill="none" stroke="#a8a8a8" stroke-width="1.700" stroke-linecap="round" stroke-linejoin="round"/></svg>
<svg class="a" style="left:1045px;top:170.5px;" width="17" height="25" viewBox="0 0 17 25"><path d="M1.500 1.500h14v22l-7-6-7 6z" fill="none" stroke="#d0d0d0" stroke-width="1.800" stroke-linejoin="round"/></svg>
<svg class="a" style="left:1095px;top:175.5px;" width="22" height="17" viewBox="0 0 22 17"><path d="M21 8.500H2M9 1.500L2 8.500L9 15.500" fill="none" stroke="#d0d0d0" stroke-width="1.800" stroke-linecap="round" stroke-linejoin="round"/></svg>
<svg class="a" style="left:1143px;top:175.5px;" width="22" height="17" viewBox="0 0 22 17"><path d="M1 8.500h19M13 1.500l7 7-7 7" fill="none" stroke="#5a5a5a" stroke-width="1.700" stroke-linecap="round" stroke-linejoin="round"/></svg>
<div class="a " style="left:1195px;top:168px;height:33px;line-height:33px;font-size:21.9px;color:#888888;letter-spacing:0.700px;">miniprogram</div>
<div class="a " style="left:1352.5px;top:168px;height:33px;line-height:33px;font-size:21.9px;color:#888888;">pages</div>
<div class="a " style="left:1440.5px;top:168px;height:33px;line-height:33px;font-size:21.9px;color:#888888;">test</div>
<svg class="a" style="left:1333px;top:177px;" width="10" height="16" viewBox="0 0 10 16"><path d="M1.500 1.500L8.500 8L1.500 14.500" fill="none" stroke="#8f8f8f" stroke-width="1.700" stroke-linecap="round" stroke-linejoin="round"/></svg>
<svg class="a" style="left:1420px;top:177px;" width="10" height="16" viewBox="0 0 10 16"><path d="M1.500 1.500L8.500 8L1.500 14.500" fill="none" stroke="#8f8f8f" stroke-width="1.700" stroke-linecap="round" stroke-linejoin="round"/></svg>
<svg class="a" style="left:1484px;top:177px;" width="10" height="16" viewBox="0 0 10 16"><path d="M1.500 1.500L8.500 8L1.500 14.500" fill="none" stroke="#8f8f8f" stroke-width="1.700" stroke-linecap="round" stroke-linejoin="round"/></svg>
<svg class="a" style="left:1608px;top:177px;" width="10" height="16" viewBox="0 0 10 16"><path d="M1.500 1.500L8.500 8L1.500 14.500" fill="none" stroke="#8f8f8f" stroke-width="1.700" stroke-linecap="round" stroke-linejoin="round"/></svg>
<svg class="a" style="left:1507px;top:172.5px;" width="22" height="21" viewBox="0 0 22 21"><rect x="0" y="0" width="22" height="21" rx="1.500" fill="#f5c52d"/><text x="20.300" y="18.800" text-anchor="end" font-family="Liberation Sans,sans-serif" font-weight="bold" font-size="10.300" fill="#3a3000">JS</text></svg>
<div class="a " style="left:1542.5px;top:168px;height:33px;line-height:33px;font-size:21.9px;color:#d0d0d0;">test.js</div>
<div class="a " style="left:1627px;top:171px;height:30px;line-height:30px;font-size:20px;color:#888888;">...</div>
<div class="a" style="left:1055.2px;top:203px;width:1.5px;height:707px;background:#69507a;"></div>
<div class="a" style="left:1078px;top:203px;width:1.2px;height:242px;background:#484848;"></div>
<div class="a" style="left:1101.5px;top:280px;width:1.2px;height:110px;background:#484848;"></div>
<div class="a" style="left:1078px;top:670px;width:1.2px;height:240px;background:#484848;"></div>
<div class="a" style="left:1101.5px;top:781px;width:1.2px;height:55px;background:#484848;"></div>
<div class="a m" style="left:984px;top:238.3px;height:28px;line-height:28px;font-size:19px;color:#434343;width:26px;text-align:right;">42</div>
<div class="a m" style="left:1101.1px;top:238.3px;height:30px;line-height:30px;font-size:20px;color:#d2d2d2;letter-spacing:-0.502px;-webkit-text-stroke:0.300px;"><span style="color:#4fb4e6">this</span><span style="color:#d2d2d2">.</span><span style="color:#e8a04c">setData</span><span style="color:#e6c229">(</span><span style="color:#d670d6">{</span></div>
<div class="a m" style="left:984px;top:294px;height:28px;line-height:28px;font-size:19px;color:#434343;width:26px;text-align:right;">43</div>
<div class="a m" style="left:1124.1px;top:294px;height:30px;line-height:30px;font-size:20px;color:#d2d2d2;letter-spacing:-0.502px;-webkit-text-stroke:0.300px;"><span style="color:#d2d2d2">userInfo: app.globalData.hasUserInfo</span><span style="color:#e6c229">?</span><span style="color:#d2d2d2">app.globalData.userInfo</span><span style="color:#9fb0c4">:</span><span style="color:#74b6e6">{},</span></div>
<div class="a m" style="left:984px;top:349.7px;height:28px;line-height:28px;font-size:19px;color:#434343;width:26px;text-align:right;">44</div>
<div class="a m" style="left:1124.1px;top:349.7px;height:30px;line-height:30px;font-size:20px;color:#d2d2d2;letter-spacing:-0.502px;-webkit-text-stroke:0.300px;"><span style="color:#d2d2d2">hasUserInfo: app.globalData.hasUserInfo</span></div>
<div class="a m" style="left:984px;top:405.4px;height:28px;line-height:28px;font-size:19px;color:#434343;width:26px;text-align:right;">45</div>
<div class="a m" style="left:1101.1px;top:405.4px;height:30px;line-height:30px;font-size:20px;color:#d2d2d2;letter-spacing:-0.502px;-webkit-text-stroke:0.300px;"><span style="color:#d670d6">}</span><span style="color:#e6c229">)</span></div>
<div class="a m" style="left:984px;top:461.1px;height:28px;line-height:28px;font-size:19px;color:#434343;width:26px;text-align:right;">46</div>
<div class="a m" style="left:1078.1px;top:461.1px;height:30px;line-height:30px;font-size:20px;color:#d2d2d2;letter-spacing:-0.502px;-webkit-text-stroke:0.300px;"><span style="color:#5aa0e0">},</span></div>
<div class="a m" style="left:984px;top:516.8px;height:28px;line-height:28px;font-size:19px;color:#434343;width:26px;text-align:right;">47</div>
<div class="a m" style="left:984px;top:572.5px;height:28px;line-height:28px;font-size:19px;color:#434343;width:26px;text-align:right;">48</div>
<div class="a m" style="left:1078.1px;top:572.5px;height:30px;line-height:30px;font-size:20px;color:#d2d2d2;letter-spacing:-0.502px;-webkit-text-stroke:0.300px;"><span style="color:#55b86e">// <span style="font-size:20.700px;letter-spacing:0">获取题库</span>-<span style="font-size:20.700px;letter-spacing:0">函数定义</span></span></div>
<div class="a m" style="left:984px;top:628.2px;height:28px;line-height:28px;font-size:19px;color:#434343;width:26px;text-align:right;">49</div>
<div class="a m" style="left:1078.1px;top:628.2px;height:30px;line-height:30px;font-size:20px;color:#d2d2d2;letter-spacing:-0.502px;-webkit-text-stroke:0.300px;"><span style="color:#e8a04c">getQuestionList</span><span style="color:#5aa0e0">(</span><span style="color:#e8705f">category</span><span style="color:#5aa0e0">, </span><span style="color:#e8705f">idx</span><span style="color:#5aa0e0">) {</span></div>
<div class="a m" style="left:984px;top:683.9px;height:28px;line-height:28px;font-size:19px;color:#434343;width:26px;text-align:right;">50</div>
<div class="a m" style="left:1101.1px;top:683.9px;height:30px;line-height:30px;font-size:20px;color:#d2d2d2;letter-spacing:-0.502px;-webkit-text-stroke:0.300px;"><span style="color:#55b86e">// <span style="font-size:20.700px;letter-spacing:0">显示</span> loading <span style="font-size:20.700px;letter-spacing:0">提示框</span></span></div>
<div class="a m" style="left:984px;top:739.6px;height:28px;line-height:28px;font-size:19px;color:#434343;width:26px;text-align:right;">51</div>
<div class="a m" style="left:1101.1px;top:739.6px;height:30px;line-height:30px;font-size:20px;color:#d2d2d2;letter-spacing:-0.502px;-webkit-text-stroke:0.300px;"><span style="color:#d2d2d2">wx.</span><span style="color:#e8a04c">showLoading</span><span style="color:#e6c229">(</span><span style="color:#d670d6">{</span></div>
<div class="a m" style="left:984px;top:795.3px;height:28px;line-height:28px;font-size:19px;color:#434343;width:26px;text-align:right;">52</div>
<div class="a m" style="left:1124.1px;top:795.3px;height:30px;line-height:30px;font-size:20px;color:#d2d2d2;letter-spacing:-0.502px;-webkit-text-stroke:0.300px;"><span style="color:#d2d2d2">title: </span><span style="color:#e8604c">'<span style="font-size:20.700px;letter-spacing:0">拼命加载中</span>'</span></div>
<div class="a m" style="left:984px;top:851px;height:28px;line-height:28px;font-size:19px;color:#434343;width:26px;text-align:right;">53</div>
<div class="a m" style="left:1101.1px;top:851px;height:30px;line-height:30px;font-size:20px;color:#d2d2d2;letter-spacing:-0.502px;-webkit-text-stroke:0.300px;"><span style="color:#d670d6">}</span><span style="color:#e6c229">)</span><span style="color:#5aa0e0">;</span></div>
<svg class="a" style="left:1023px;top:233px;" width="18" height="10" viewBox="0 0 18 10"><path d="M1.200 1.500L9 8.500L16.800 1.500" fill="none" stroke="#c4c4c4" stroke-width="1.900" stroke-linecap="round" stroke-linejoin="round"/></svg>
<svg class="a" style="left:1023px;top:623px;" width="18" height="10" viewBox="0 0 18 10"><path d="M1.200 1.500L9 8.500L16.800 1.500" fill="none" stroke="#c4c4c4" stroke-width="1.900" stroke-linecap="round" stroke-linejoin="round"/></svg>
<svg class="a" style="left:1023px;top:734px;" width="18" height="10" viewBox="0 0 18 10"><path d="M1.200 1.500L9 8.500L16.800 1.500" fill="none" stroke="#c4c4c4" stroke-width="1.900" stroke-linecap="round" stroke-linejoin="round"/></svg>
<svg class="a" style="left:1023px;top:900px;" width="18" height="10" viewBox="0 0 18 10"><path d="M1.200 1.500L9 8.500L16.800 1.500" fill="none" stroke="#c4c4c4" stroke-width="1.900" stroke-linecap="round" stroke-linejoin="round"/></svg>
<div class="a" style="left:974px;top:906.8px;width:1179px;height:2.4px;background:#444444;"></div>
<div class="a" style="left:974px;top:909.2px;width:1179px;height:50.8px;background:#333333;"></div>
<div class="a " style="left:968px;top:922.5px;height:28px;line-height:28px;font-size:19px;color:#8a8a8a;width:120px;text-align:center;">构建</div>
<div class="a " style="left:1051.5px;top:922.5px;height:28px;line-height:28px;font-size:19px;color:#f2f2f2;width:120px;text-align:center;">调试器</div>
<div class="a " style="left:1134px;top:922.5px;height:28px;line-height:28px;font-size:19px;color:#8a8a8a;width:120px;text-align:center;">问题</div>
<div class="a " style="left:1206.5px;top:922.5px;height:28px;line-height:28px;font-size:19px;color:#8a8a8a;width:120px;text-align:center;">输出</div>
<div class="a " style="left:1280.5px;top:922.5px;height:28px;line-height:28px;font-size:19px;color:#8a8a8a;width:120px;text-align:center;">终端</div>
<div class="a " style="left:1373.5px;top:922.5px;height:28px;line-height:28px;font-size:19px;color:#8a8a8a;width:120px;text-align:center;">代码质量</div>
<div class="a" style="left:1083px;top:957px;width:57px;height:2px;background:#d8d8d8;"></div>
<svg class="a" style="left:2073px;top:935px;" width="18" height="10" viewBox="0 0 18 10"><path d="M1.500 8.500L9 1.500L16.500 8.500" fill="none" stroke="#d0d0d0" stroke-width="1.700" stroke-linecap="round" stroke-linejoin="round"/></svg>
<svg class="a" style="left:2130px;top:932.5px;" width="15" height="15" viewBox="0 0 15 15"><path d="M1 1L14 14M14 1L1 14" stroke="#e0e0e0" stroke-width="1.800" stroke-linecap="round"/></svg>
<div class="a" style="left:974px;top:960px;width:1179px;height:46px;background:#28292a;"></div>
<div class="a" style="left:974px;top:1005px;width:1179px;height:2px;background:#3b3b3b;"></div>
<div class="a" style="left:974px;top:1007px;width:1179px;height:46px;background:#28292a;"></div>
<div class="a" style="left:974px;top:1052.5px;width:1179px;height:1.5px;background:#3b3b3b;"></div>
<div class="a" style="left:974px;top:1054px;width:1179px;height:218px;background:#242424;"></div>
<div class="a" style="left:1141px;top:960px;width:114px;height:45px;background:#000;"></div>
<svg class="a" style="left:991.5px;top:971px;" width="24" height="24" viewBox="0 0 24 24"><path d="M9 19.500H3a1.500 1.500 0 0 1-1.500-1.500V3A1.500 1.500 0 0 1 3 1.500h15A1.500 1.500 0 0 1 19.500 3v6" fill="none" stroke="#9a9a9a" stroke-width="1.700" stroke-linejoin="round" stroke-linecap="round"/><path d="M10.500 10.500l4.200 12 2-5 5-2z" fill="#9a9a9a" stroke="#9a9a9a" stroke-width="1.200" stroke-linejoin="round"/><path d="M17 17l5 5" fill="none" stroke="#9a9a9a" stroke-width="1.700" stroke-linejoin="round" stroke-linecap="round"/></svg>
<div class="a" style="left:1035px;top:967px;width:1.2px;height:30px;background:#3e3e3e;"></div>
<div class="a " style="left:1012.5px;top:968.5px;height:30px;line-height:30px;font-size:20.3px;color:#d2d2d2;width:160px;text-align:center;">Wxml</div>
<div class="a " style="left:1117.5px;top:968.5px;height:30px;line-height:30px;font-size:20.3px;color:#fff;width:160px;text-align:center;">Console</div>
<div class="a " style="left:1235px;top:968.5px;height:30px;line-height:30px;font-size:20.3px;color:#d2d2d2;width:160px;text-align:center;">Network</div>
<div class="a " style="left:1355.5px;top:968.5px;height:30px;line-height:30px;font-size:20.3px;color:#d2d2d2;width:160px;text-align:center;">AppData</div>
<div class="a " style="left:1472.5px;top:968.5px;height:30px;line-height:30px;font-size:20.3px;color:#d2d2d2;width:160px;text-align:center;">Storage</div>
<div class="a " style="left:1607px;top:968.5px;height:30px;line-height:30px;font-size:20.3px;color:#d2d2d2;width:160px;text-align:center;">Performance</div>
<div class="a " style="left:1741.5px;top:968.5px;height:30px;line-height:30px;font-size:20.3px;color:#d2d2d2;width:160px;text-align:center;">Sources</div>
<div class="a " style="left:1881.5px;top:961.5px;height:39px;line-height:39px;font-size:26px;color:#b0b0b0;width:40px;text-align:center;">»</div>
<div class="a" style="left:2025px;top:966px;width:1.2px;height:30px;background:#3e3e3e;"></div>
<svg class="a" style="left:2046.5px;top:971px;" width="22" height="22" viewBox="0 0 22 22"><g transform="translate(11 11)" fill="#a8a8a8"><rect x="-2.800" y="-11" width="5.600" height="22" rx="1" transform="rotate(0)"/><rect x="-2.800" y="-11" width="5.600" height="22" rx="1" transform="rotate(60)"/><rect x="-2.800" y="-11" width="5.600" height="22" rx="1" transform="rotate(120)"/><circle r="7.92"/><circle r="3.74" fill="#28292a"/></g></svg>
<svg class="a" style="left:2104px;top:970px;" width="6" height="26" viewBox="0 0 6 26"><circle cx="3" cy="3" r="2.300" fill="#a8a8a8"/><circle cx="3" cy="12.500" r="2.300" fill="#a8a8a8"/><circle cx="3" cy="22" r="2.300" fill="#a8a8a8"/></svg>
<svg class="a" style="left:2141px;top:969px;" width="14" height="26" viewBox="0 0 14 26"><path d="M14 2H8v16h6M1.500 8v16.500H14" fill="none" stroke="#9a9a9a" stroke-width="2.200"/></svg>
<svg class="a" style="left:989px;top:1019px;" width="24" height="22" viewBox="0 0 24 22"><rect x="1" y="1" width="22" height="20" rx="1" fill="none" stroke="#9a9a9a" stroke-width="1.700" stroke-linejoin="round" stroke-linecap="round"/><path d="M7 1v20" fill="none" stroke="#9a9a9a" stroke-width="1.700" stroke-linejoin="round" stroke-linecap="round"/><path d="M11.500 6.500l7 4.500-7 4.500z" fill="#9a9a9a"/></svg>
<svg class="a" style="left:1041px;top:1019px;" width="22" height="22" viewBox="0 0 22 22"><circle cx="11" cy="11" r="9.300" fill="none" stroke="#a0a0a0" stroke-width="2.200"/><path d="M4.500 4.500L17.500 17.500" stroke="#a0a0a0" stroke-width="2.200"/></svg>
<div class="a" style="left:1081px;top:1013px;width:1.2px;height:32px;background:#3e3e3e;"></div>
<div class="a " style="left:1100.5px;top:1016px;height:30px;line-height:30px;font-size:20.3px;color:#d2d2d2;">top</div>
<div class="a" style="left:1312px;top:1024px;border-left:5px solid transparent;border-right:5px solid transparent;border-top:8px solid #a8a8a8;width:0;height:0"></div>
<div class="a" style="left:1340px;top:1013px;width:1.2px;height:32px;background:#3e3e3e;"></div>
<svg class="a" style="left:1358px;top:1021px;" width="28" height="18" viewBox="0 0 28 18"><path d="M0.500 9C4 3 8.500 0.500 14 0.500S24 3 27.500 9C24 15 19.500 17.500 14 17.500S4 15 0.500 9z" fill="#a8a8a8"/><circle cx="14" cy="9" r="5.500" fill="#28292a"/><circle cx="14" cy="9" r="3" fill="#a8a8a8"/></svg>
<div class="a" style="left:1400px;top:1013px;width:1.2px;height:32px;background:#3e3e3e;"></div>
<div class="a" style="left:1415px;top:1011px;width:275px;height:36px;border:1.500px solid #454545;background:#242526"></div>
<div class="a " style="left:1424.5px;top:1015px;height:30px;line-height:30px;font-size:20.3px;color:#9e9e9e;">Filter</div>
<div class="a " style="left:1704px;top:1015px;height:30px;line-height:30px;font-size:20.3px;color:#d2d2d2;">Default levels</div>
<div class="a" style="left:1836px;top:1024px;border-left:5px solid transparent;border-right:5px solid transparent;border-top:8px solid #a8a8a8;width:0;height:0"></div>
<div class="a" style="left:2122px;top:1013px;width:1.2px;height:32px;background:#3e3e3e;"></div>
<svg class="a" style="left:2144px;top:1018px;" width="22" height="22" viewBox="0 0 22 22"><g transform="translate(11 11)" fill="#a8a8a8"><rect x="-2.800" y="-11" width="5.600" height="22" rx="1" transform="rotate(0)"/><rect x="-2.800" y="-11" width="5.600" height="22" rx="1" transform="rotate(60)"/><rect x="-2.800" y="-11" width="5.600" height="22" rx="1" transform="rotate(120)"/><circle r="7.92"/><circle r="3.74" fill="#28292a"/></g></svg>
<svg class="a" style="left:990px;top:1064px;" width="10" height="14" viewBox="0 0 10 14"><path d="M2 1.500L8 7L2 12.500" fill="none" stroke="#3a7be0" stroke-width="2.200" stroke-linecap="round" stroke-linejoin="round"/></svg>
<div class="a s" style="left:1017px;top:1057px;height:29px;line-height:29px;font-size:19.5px;color:#bdbdbd;">公众号<span style="margin-left:4px">:</span></div>
<div class="a s" style="left:1017px;top:1104.5px;height:31px;line-height:31px;font-size:20.5px;color:#bdbdbd;">木番薯科技</div>
<svg class="a" style="left:1265px;top:1172px;" width="85" height="69" viewBox="0 0 85 69"><ellipse cx="34" cy="28" rx="33" ry="27.500" fill="#999999"/><path d="M14 47l-4 12 14-7z" fill="#999999"/><circle cx="22.500" cy="19" r="4.300" fill="#242424"/><circle cx="45" cy="19" r="4.300" fill="#242424"/><ellipse cx="58" cy="45" rx="28.500" ry="23.500" fill="#999999" stroke="#242424" stroke-width="3"/><path d="M72 62l10 7-2-12z" fill="#999999"/><circle cx="48.500" cy="38" r="3.600" fill="#242424"/><circle cx="67.500" cy="38" r="3.600" fill="#242424"/></svg>
<div class="a " style="left:1366.3px;top:1170.3px;height:80px;line-height:80px;font-size:57px;color:#999999;letter-spacing:6.300px;">公众号</div>
<div class="a " style="left:1571px;top:1166px;height:80px;line-height:80px;font-size:60px;color:#999999;">·</div>
<div class="a " style="left:1614.5px;top:1169.5px;height:80px;line-height:80px;font-size:62.5px;color:#999999;letter-spacing:1.400px;">mengchatchat91</div>
</body></html>
